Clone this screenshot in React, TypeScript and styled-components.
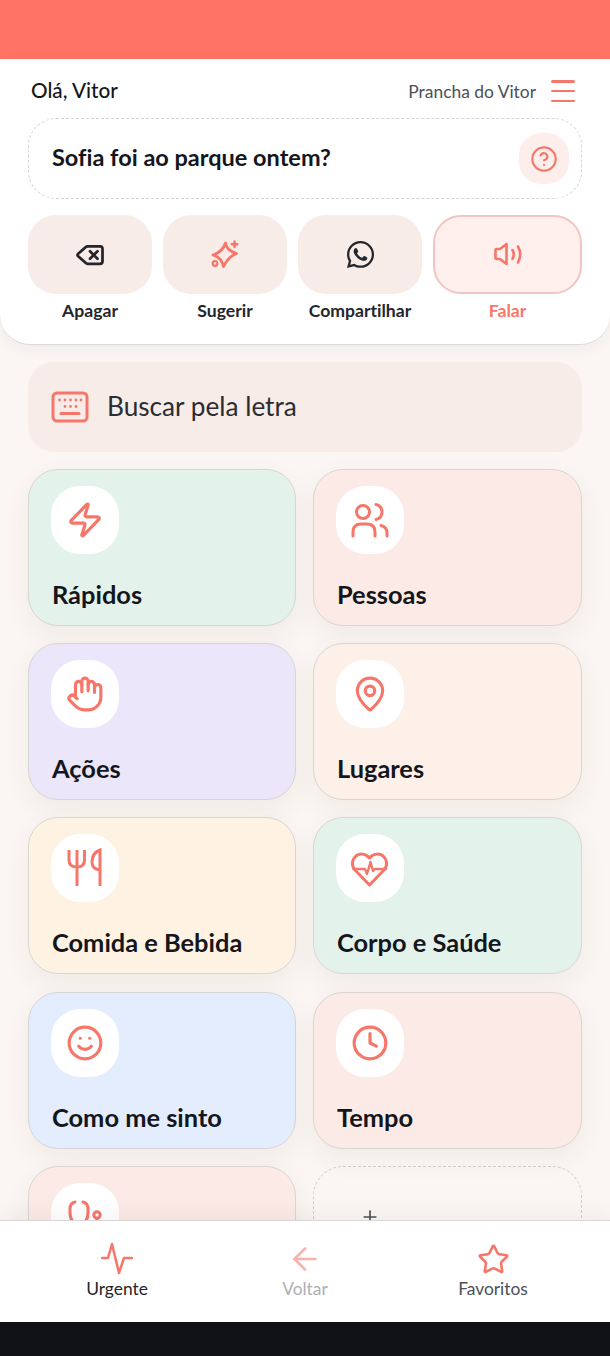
import React from 'react';
import styled, { createGlobalStyle } from 'styled-components';
import { ArrowLeft, CircleHelp, Clock, Delete, Hand, MapPin, Plus, Smile, Star, Zap } from 'lucide-react';
import { FaWhatsapp } from 'react-icons/fa';

const CORAL = '#f6766a';

const GlobalStyle = createGlobalStyle`
  html, body {
    margin: 0;
    padding: 0;
    background: #fbf6f3;
  }
  * {
    box-sizing: border-box;
  }
  body {
    font-family: 'Lato', 'Liberation Sans', sans-serif;
    font-variant-ligatures: none;
  }
`;

const Screen = styled.div`
  width: 610px;
  height: 1356px;
  display: flex;
  flex-direction: column;
  overflow: hidden;
  background: #fbf6f3;
`;

const StatusBar = styled.div`
  height: 59px;
  flex: none;
  background: #ff7366;
`;

const TopPanel = styled.header`
  flex: none;
  height: 286px;
  background: #fff;
  border-radius: 0 0 30px 30px;
  border-bottom: 1px solid #dcdad8;
  box-shadow: 0 4px 14px rgba(60, 40, 30, 0.05);
  padding: 20px 28px 0;
  position: relative;
  z-index: 1;
`;

const TopRow = styled.div`
  height: 24px;
  display: flex;
  align-items: center;
  justify-content: space-between;
  padding: 0 7px 0 3px;
`;

const Greeting = styled.span`
  font-size: 20.7px;
  font-weight: 500;
  color: #14161c;
  margin-bottom: 2px;
`;

const BoardName = styled.div`
  display: flex;
  align-items: center;
  gap: 15px;
  font-size: 17.4px;
  color: #4b5058;
`;

const MenuLines = styled.div`
  width: 24px;
  height: 22px;
  display: flex;
  flex-direction: column;
  justify-content: space-between;

  span {
    height: 2.5px;
    background: ${CORAL};
    border-radius: 2px;
  }
`;

const PhraseBox = styled.div`
  margin-top: 15px;
  height: 81px;
  border: 1px dashed #d3d3d3;
  border-radius: 28px;
  display: flex;
  align-items: center;
  justify-content: space-between;
  padding: 0 12px 0 23px;
`;

const PhraseText = styled.span`
  font-size: 23.5px;
  font-weight: 700;
  color: #14161c;
  margin-bottom: 4px;
`;

const HelpButton = styled.div`
  width: 50px;
  height: 51px;
  border-radius: 22px;
  background: #fdeeeb;
  display: flex;
  align-items: center;
  justify-content: center;
  color: ${CORAL};
`;

const ActionGrid = styled.div`
  margin-top: 16px;
  display: grid;
  grid-template-columns: 124px 124px 124px 149px;
  column-gap: 11px;
`;

const Action = styled.div`
  display: flex;
  flex-direction: column;
  align-items: center;
`;

const ActionButton = styled.div<{ $active?: boolean; $tint?: boolean }>`
  width: 100%;
  height: 79px;
  border-radius: 28px;
  display: flex;
  align-items: center;
  justify-content: center;
  background: ${(p) => (p.$active ? '#fff0ee' : '#f7ece8')};
  border: ${(p) => (p.$active ? '2px solid #efc6c1' : 'none')};
  color: ${(p) => (p.$tint ? CORAL : '#24262c')};
`;

const ActionLabel = styled.span<{ $active?: boolean }>`
  margin-top: 6px;
  font-size: 17.6px;
  font-weight: 700;
  color: ${(p) => (p.$active ? CORAL : '#24262c')};
`;

const Main = styled.main`
  flex: 1;
  min-height: 0;
  overflow: hidden;
  padding: 17px 28px 0;
`;

const SearchBar = styled.div`
  height: 90px;
  border-radius: 26px;
  background: #f8ece8;
  display: flex;
  align-items: center;
  gap: 18px;
  padding: 0 23px;
  color: ${CORAL};
`;

const SearchLabel = styled.span`
  font-size: 26.2px;
  color: #2a2c33;
  margin-bottom: 2px;
`;

const CardGrid = styled.div`
  margin-top: 17px;
  display: grid;
  grid-template-columns: 268px 269px;
  column-gap: 17px;
  grid-auto-rows: 157px;
  row-gap: 17.2px;
`;

const Card = styled.div<{ $bg?: string }>`
  border-radius: 30px;
  background: ${(p) => p.$bg ?? 'transparent'};
  border: 1px ${(p) => (p.$bg ? 'solid #d7d6d3' : 'dashed #cfcccb')};
  box-shadow: ${(p) => (p.$bg ? '0 10px 28px rgba(70, 50, 40, 0.06)' : 'none')};
  padding: 16px 22px 0 23px;
  display: flex;
  flex-direction: column;
`;

const IconTile = styled.div<{ $plain?: boolean }>`
  width: 68px;
  height: 68px;
  margin-left: -1px;
  border-radius: 29px;
  background: ${(p) => (p.$plain ? 'transparent' : '#fff')};
  color: ${(p) => (p.$plain ? '#4b5058' : CORAL)};
  display: flex;
  align-items: center;
  justify-content: center;
`;

const CardLabel = styled.span`
  margin-top: 24px;
  font-size: 25.4px;
  line-height: 32px;
  font-weight: 700;
  color: #14161c;
`;

const BottomNav = styled.nav`
  flex: none;
  height: 102px;
  background: #fff;
  border-top: 1px solid #d8d8d8;
  padding: 0 23px;
  display: grid;
  grid-template-columns: repeat(3, 188px);
  position: relative;
  z-index: 1;
  box-shadow: 0 -6px 18px rgba(60, 40, 30, 0.05);
`;

const NavItem = styled.div`
  padding-top: 20px;
  display: flex;
  flex-direction: column;
  align-items: center;
  gap: 1px;
`;

const NavIcon = styled.div<{ $faded?: boolean }>`
  width: 36px;
  height: 36px;
  display: flex;
  align-items: center;
  justify-content: center;
  color: ${CORAL};
  opacity: ${(p) => (p.$faded ? 0.55 : 1)};
`;

const NavLabel = styled.span<{ $color: string }>`
  font-size: 17.4px;
  line-height: 22px;
  color: ${(p) => p.$color};
`;

const BlackBar = styled.div`
  height: 34px;
  flex: none;
  background: #101218;
`;

const Line = styled.svg.attrs({
  fill: 'none',
  stroke: 'currentColor',
  strokeLinecap: 'round',
  strokeLinejoin: 'round',
})``;

const SparkleIcon = () => (
  <Line width="32" height="32" viewBox="0 0 32 32" strokeWidth="2.800">
    <path d="M16.500 4Q17.500 11.500 27.500 14.500Q20 17 14.500 27.500Q12.500 18.500 4 16Q13.500 13 16.500 4Z" />
    <path d="M25.500 2.500v5.500M22.700 5.200h5.600" strokeWidth="2.400" />
    <circle cx="6" cy="24.500" r="2.300" strokeWidth="2.200" />
  </Line>
);

const SpeakerIcon = () => (
  <Line width="32" height="32" viewBox="0 0 32 32" strokeWidth="2.600">
    <path d="M3.500 11Q3.500 10 4.500 10H8L14.500 5V25L8 20H4.500Q3.500 20 3.500 19Z" />
    <path d="M20.500 11Q23 15.500 20.500 20" />
    <path d="M26 7.500Q30.500 15.500 26 23.500" />
  </Line>
);

const KeyboardIcon = () => (
  <Line width="38" height="32" viewBox="0 0 38 32" strokeWidth="3">
    <rect x="2" y="2" width="34" height="28" rx="4" />
    <path d="M8.500 9h.01M14 9h.01M19.500 9h.01M25 9h.01M30 9h.01M14 15.500h.01M19.500 15.500h.01M25 15.500h.01" strokeWidth="2.800" />
    <path d="M10 22.500h18" />
  </Line>
);

const UsersIcon = () => (
  <Line width="40" height="40" viewBox="0 0 40 40" strokeWidth="3">
    <circle cx="13" cy="12" r="6.500" />
    <path d="M26 4.500Q32 6 32 12Q32 18 26 19.500" />
    <path d="M3 36v-4q0-8 8-8h6q8 0 8 8v4" />
    <path d="M31 25.500Q37 27 37 33v3" />
  </Line>
);

const CutleryIcon = () => (
  <svg width="40" height="40" viewBox="0 0 40 40" fill="none" stroke="currentColor" strokeWidth="3">
    <path d="M4 2v10q0 7 8 7q7.500 0 7.500-7V2" />
    <path d="M12 2v36" />
    <path d="M35 38V2Q27 5 27 14Q27 21 35 22" />
  </svg>
);

const HeartIcon = () => (
  <Line width="40" height="40" viewBox="0 0 40 40" strokeWidth="3">
    <path d="M19.500 37L5 22C1 17.500 2 12 5 9C9 5 15.500 5 19.500 10C23.500 5 30 5 34 9C37 12 38 17.500 34 22Z" />
    <path d="M3.500 21H15L17 26L20.500 14L23 23L25 21H36" strokeWidth="2.400" />
  </Line>
);

const StethoscopeIcon = () => (
  <Line width="40" height="40" viewBox="0 0 40 40" strokeWidth="3">
    <path d="M10 5Q5 6 5 12V16Q5 26 14 27" />
    <path d="M18 5Q23 6 23 12V16Q23 26 14 27" />
    <circle cx="32" cy="18" r="3.200" />
    <path d="M14 27v3q0 6 8 6q10 0 10-8v-6.500" />
  </Line>
);

const PulseIcon = () => (
  <Line width="32" height="32" viewBox="0 0 32 32" strokeWidth="2.500">
    <path d="M1 15H7L11 1L18 30L23 15H31" />
  </Line>
);

// the last row is cut off by the bottom nav, so its cards show no label
const cards = [
  { id: 'rapidos', label: 'Rápidos', bg: '#e3f3ec', icon: <Zap size={38} strokeWidth={2} /> },
  { id: 'pessoas', label: 'Pessoas', bg: '#fceae6', icon: <UsersIcon /> },
  { id: 'acoes', label: 'Ações', bg: '#ece6fb', icon: <Hand size={38} strokeWidth={2} /> },
  { id: 'lugares', label: 'Lugares', bg: '#fdf0e8', icon: <MapPin size={38} strokeWidth={2} /> },
  { id: 'comida', label: 'Comida e Bebida', bg: '#fef2e3', icon: <CutleryIcon /> },
  { id: 'corpo', label: 'Corpo e Saúde', bg: '#e3f3ec', icon: <HeartIcon /> },
  { id: 'sinto', label: 'Como me sinto', bg: '#e3edfd', icon: <Smile size={38} strokeWidth={2} /> },
  { id: 'tempo', label: 'Tempo', bg: '#fceae6', icon: <Clock size={38} strokeWidth={2} /> },
  { id: 'medico', bg: '#fceae6', icon: <StethoscopeIcon /> },
];

const App = () => (
  <Screen>
    <GlobalStyle />
    <StatusBar />
    <TopPanel>
      <TopRow>
        <Greeting>Olá, Vitor</Greeting>
        <BoardName>
          Prancha do Vitor
          <MenuLines>
            <span />
            <span />
            <span />
          </MenuLines>
        </BoardName>
      </TopRow>
      <PhraseBox>
        <PhraseText>Sofia foi ao parque ontem?</PhraseText>
        <HelpButton>
          <CircleHelp size={28} strokeWidth={1.8} />
        </HelpButton>
      </PhraseBox>
      <ActionGrid>
        <Action>
          <ActionButton>
            <Delete size={30} strokeWidth={2.2} />
          </ActionButton>
          <ActionLabel>Apagar</ActionLabel>
        </Action>
        <Action>
          <ActionButton $tint>
            <SparkleIcon />
          </ActionButton>
          <ActionLabel>Sugerir</ActionLabel>
        </Action>
        <Action>
          <ActionButton>
            <FaWhatsapp size={31} />
          </ActionButton>
          <ActionLabel>Compartilhar</ActionLabel>
        </Action>
        <Action>
          <ActionButton $active $tint>
            <SpeakerIcon />
          </ActionButton>
          <ActionLabel $active>Falar</ActionLabel>
        </Action>
      </ActionGrid>
    </TopPanel>
    <Main>
      <SearchBar>
        <KeyboardIcon />
        <SearchLabel>Buscar pela letra</SearchLabel>
      </SearchBar>
      <CardGrid>
        {cards.map((card) => (
          <Card key={card.id} $bg={card.bg}>
            <IconTile>{card.icon}</IconTile>
            {card.label && <CardLabel>{card.label}</CardLabel>}
          </Card>
        ))}
        <Card>
          <IconTile $plain>
            <Plus size={20} strokeWidth={2} />
          </IconTile>
        </Card>
      </CardGrid>
    </Main>
    <BottomNav>
      <NavItem>
        <NavIcon>
          <PulseIcon />
        </NavIcon>
        <NavLabel $color="#24262c">Urgente</NavLabel>
      </NavItem>
      <NavItem>
        <NavIcon $faded>
          <ArrowLeft size={36} strokeWidth={1.7} />
        </NavIcon>
        <NavLabel $color="#aeb0b4">Voltar</NavLabel>
      </NavItem>
      <NavItem>
        <NavIcon>
          <Star size={33} strokeWidth={1.9} />
        </NavIcon>
        <NavLabel $color="#4b5058">Favoritos</NavLabel>
      </NavItem>
    </BottomNav>
    <BlackBar />
  </Screen>
);

export default App;
